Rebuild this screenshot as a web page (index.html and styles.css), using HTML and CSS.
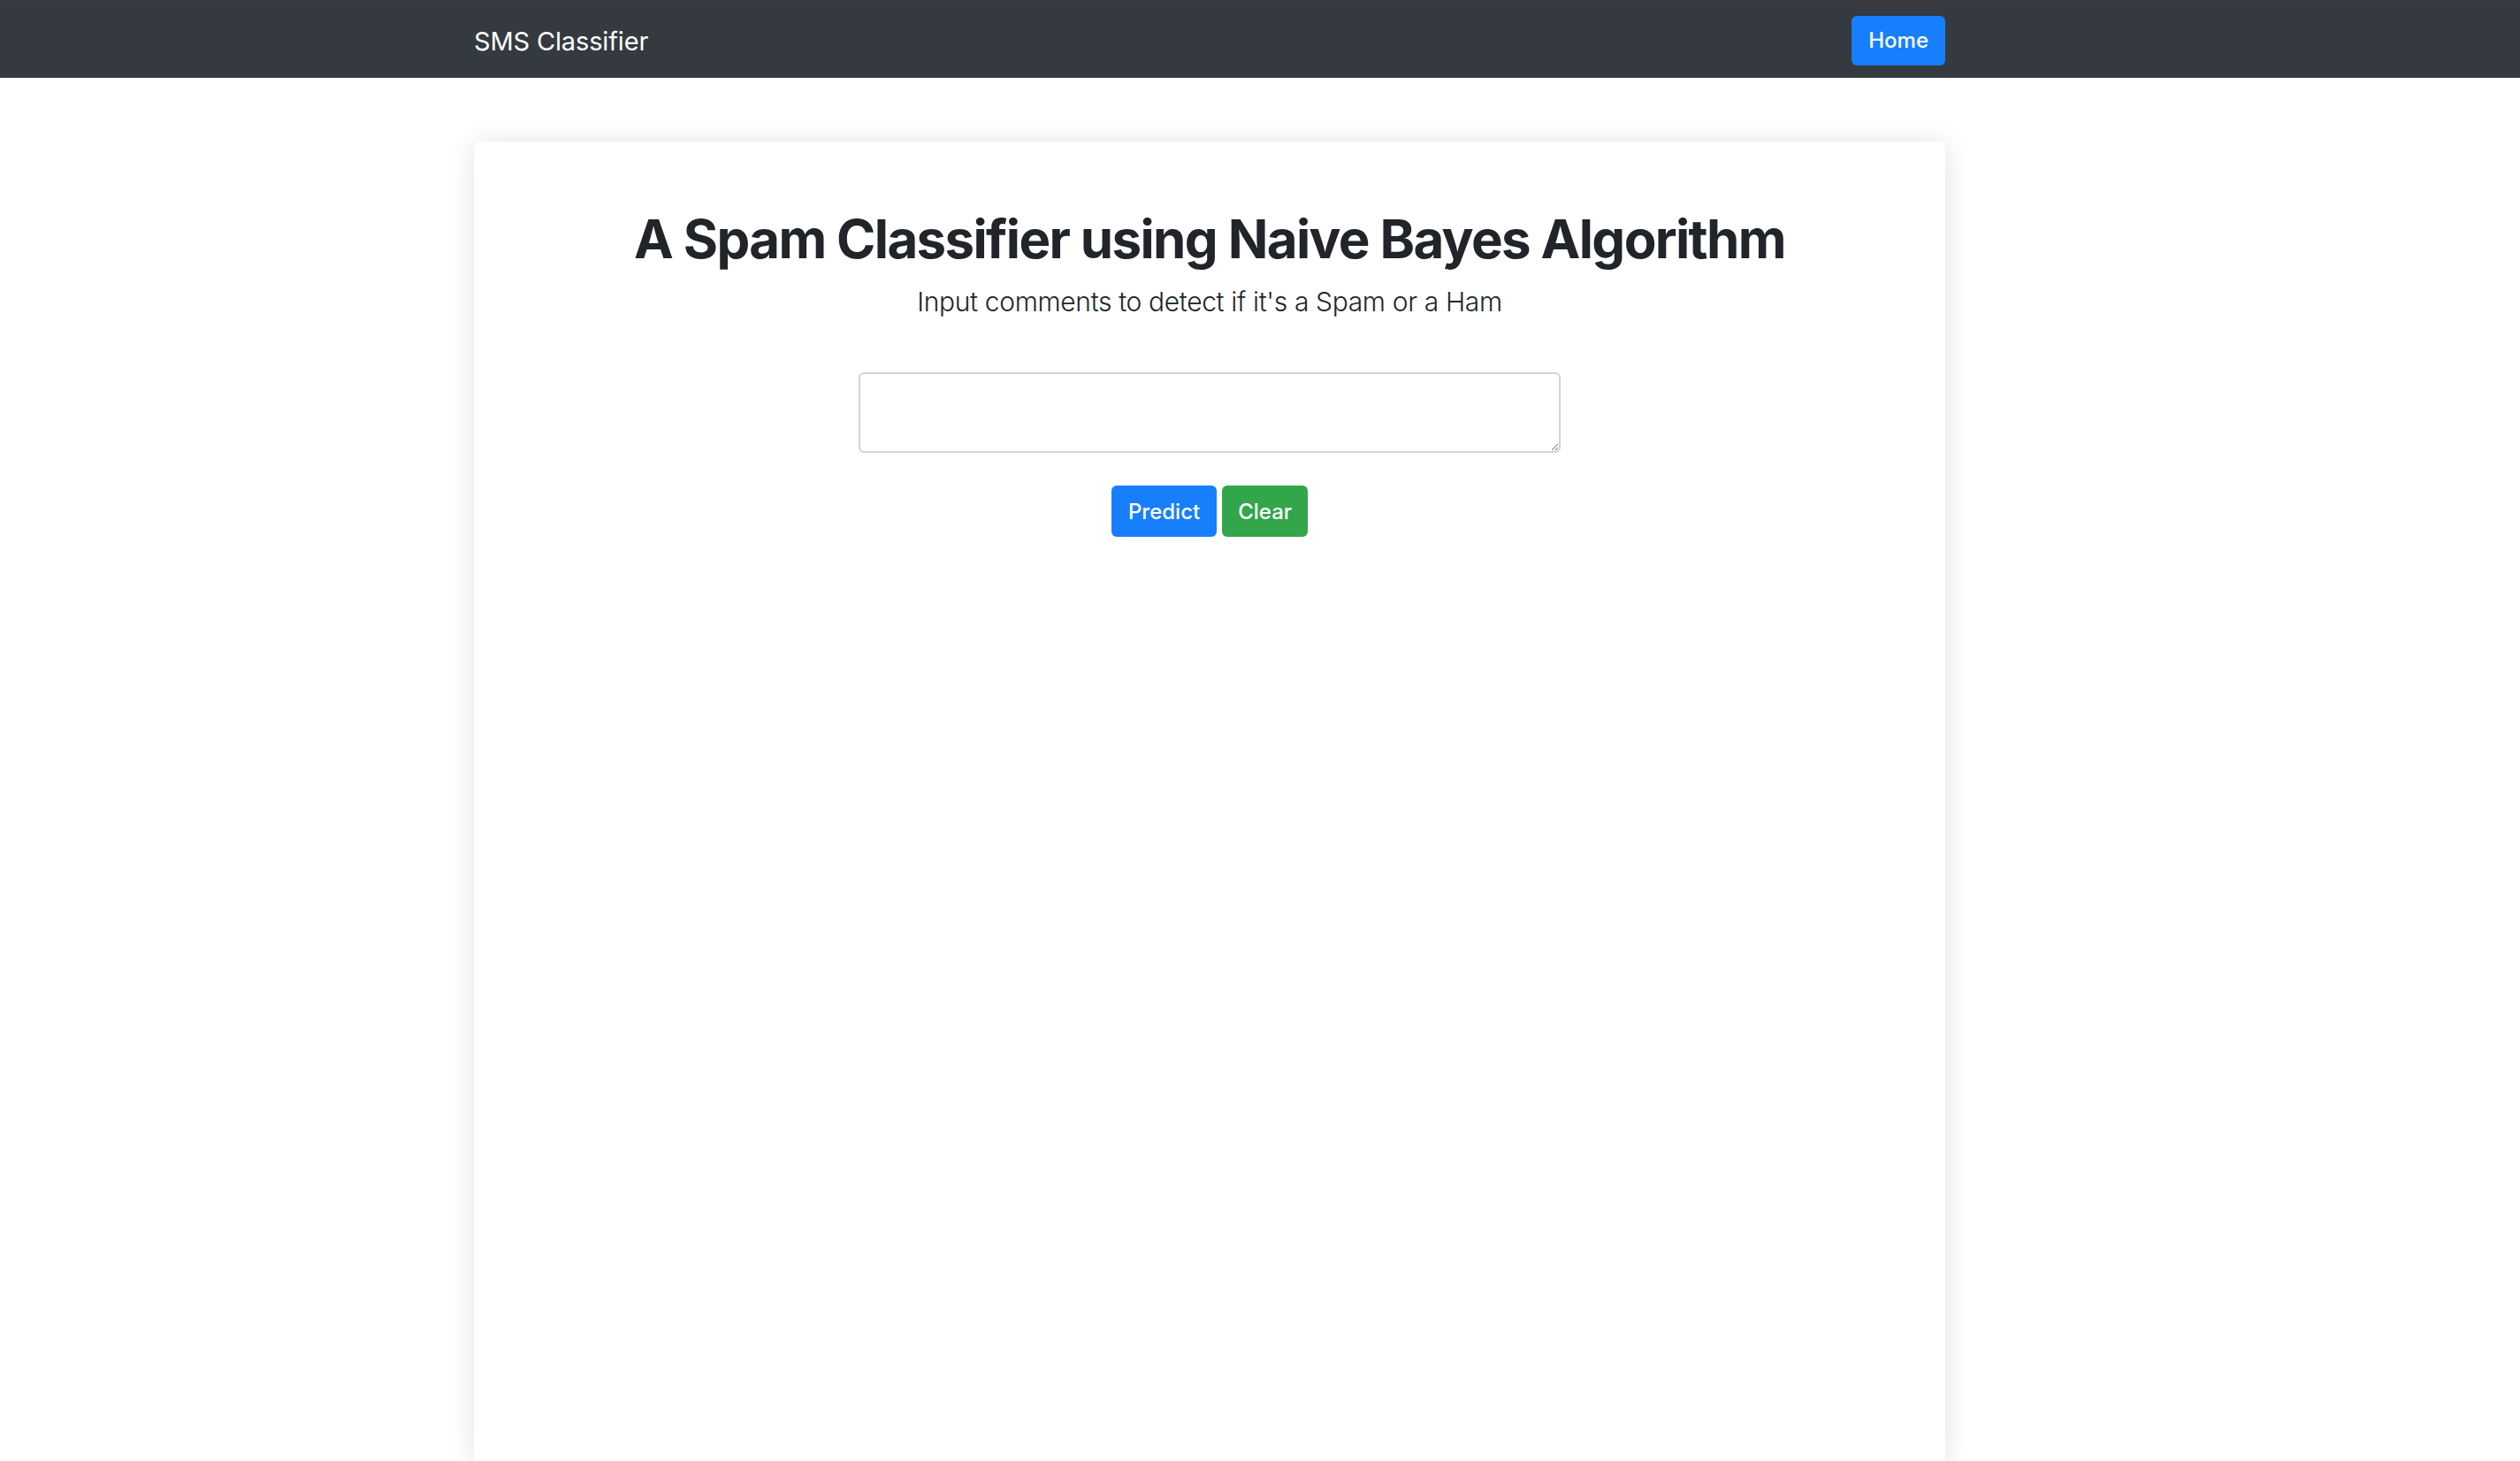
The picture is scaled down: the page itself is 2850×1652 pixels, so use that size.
FILE: index.html
```html
<!DOCTYPE html>
<html lang="en">
<head>
<meta charset="utf-8">
<title>SMS Classifier</title>
<link rel="stylesheet" href="styles.css">
</head>
<body>
<nav class="navbar">
  <div class="nav-inner">
    <span class="brand">SMS Classifier</span>
    <a class="btn btn-primary btn-home" href="#">Home</a>
  </div>
</nav>
<main class="wrap">
  <section class="card">
    <h1 class="title">A Spam Classifier using Naive Bayes Algorithm</h1>
    <p class="lead">Input comments to detect if it's a Spam or a Ham</p>
    <form class="form">
      <textarea class="input" rows="2"></textarea>
      <div class="actions">
        <button type="button" class="btn btn-primary btn-predict">Predict</button>
        <button type="button" class="btn btn-success btn-clear">Clear</button>
      </div>
    </form>
  </section>
</main>
</body>
</html>
```
FILE: styles.css
```css
* { box-sizing: border-box; }
html, body { margin: 0; padding: 0; }
body {
  font-family: Inter, "Noto Sans", sans-serif;
  color: #212529;
  background: #fff;
  overflow: hidden;
  height: 1652px;
}
.navbar {
  background: #343a40;
  border-top: 3px solid #3b3b3c;
  height: 88px;
}
.nav-inner {
  width: 1664px;
  margin-left: 536px;
  height: 85px;
  display: flex;
  align-items: center;
  justify-content: space-between;
}
.brand {
  color: #fff;
  font-size: 29px;
  letter-spacing: -0.15px;
  line-height: 1;
  margin-top: 2px;
}
.btn {
  display: inline-flex;
  align-items: center;
  justify-content: center;
  height: 56px;
  padding: 0 18px;
  font-family: inherit;
  font-size: 24px;
  font-weight: 500;
  color: #fff;
  border: none;
  border-radius: 6px;
  text-decoration: none;
  cursor: pointer;
}
.btn-primary { background: #177ffb; }
.btn-success { background: #33a54b; }
.btn-home { padding: 0 19px; }
.wrap {
  width: 1664px;
  margin-left: 536px;
  padding-top: 72px;
}
.card {
  background: #fff;
  box-shadow: 0 2px 30px rgba(0, 0, 0, 0.12);
  border-radius: 6px 6px 0 0;
  height: 1492px;
  padding-top: 74px;
  text-align: center;
}
.title {
  margin: 0;
  font-size: 60px;
  font-weight: 700;
  letter-spacing: -1.65px;
  line-height: 72px;
}
.lead {
  margin: 13px 0 0;
  font-size: 30px;
  font-weight: 300;
  letter-spacing: -0.35px;
  line-height: 45px;
  color: #212529;
}
.form {
  margin-top: 57px;
  display: flex;
  flex-direction: column;
  align-items: center;
}
.input {
  width: 794px;
  height: 91px;
  border: 2px solid #ced4da;
  border-radius: 6px;
  font-family: inherit;
  font-size: 24px;
  padding: 9px 18px;
}
.actions {
  margin-top: 37px;
  display: flex;
  gap: 6px;
}
.actions .btn { height: 58px; }
.btn-predict { padding: 0 19px; }
.btn-clear { padding: 0 18px; }
```
